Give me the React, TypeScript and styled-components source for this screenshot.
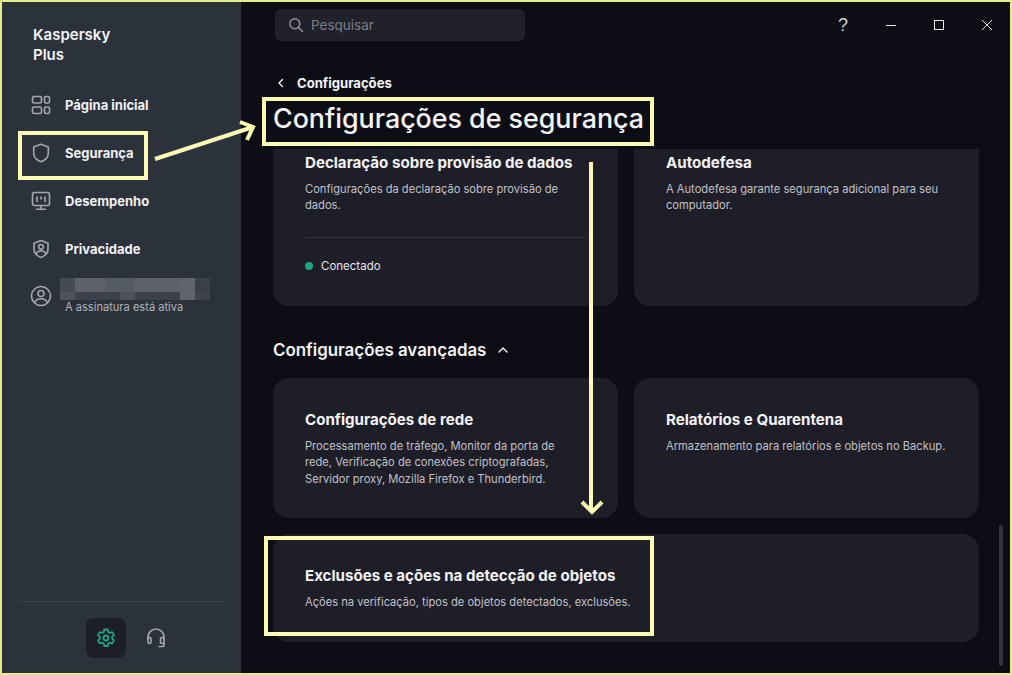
import React from "react";
import styled, { createGlobalStyle } from "styled-components";

const Global = createGlobalStyle`
  html, body { margin: 0; padding: 0; background: #0d0e15; }
  * { box-sizing: border-box; }
`;

const Frame = styled.div`
  position: relative;
  width: 1012px;
  height: 675px;
  overflow: hidden;
  display: flex;
  border: 2px solid #e4ec8c;
  background: #0d0e15;
  font-family: Inter, "Liberation Sans", sans-serif;
  color: #f4f4f6;
`;

const Sidebar = styled.aside`
  width: 239px;
  flex: none;
  display: flex;
  flex-direction: column;
  background: #2b323c;
  padding: 23px 15px 15px 16px;
`;

const Brand = styled.div`
  font-size: 15px;
  line-height: 20px;
  font-weight: 600;
  padding-left: 15px;
  color: #f2f3f5;
  margin-bottom: 16px;
`;

const Nav = styled.nav`
  display: flex;
  flex-direction: column;
`;

const NavRow = styled.div`
  display: flex;
  align-items: center;
  height: 48px;
  gap: 14px;
  padding-left: 13px;
  font-size: 13px;
  font-weight: 700;
  color: #f0f1f3;
  svg { flex: none; color: #a3a8af; }
`;

const AccountRow = styled.div`
  display: flex;
  align-items: flex-start;
  gap: 13px;
  padding-left: 12px;
  margin-top: 5px;
  svg { flex: none; color: #a3a8af; margin-top: 7px; }
`;

const AccountText = styled.div`
  display: flex;
  flex-direction: column;
  margin-left: -5px;
`;

const Mosaic = styled.div`
  display: grid;
  grid-template-columns: repeat(10, 15px);
  grid-template-rows: 14px 8px;
  width: 150px;
`;

const Tile = styled.div<{ $c: string }>`
  background: ${(p) => p.$c};
`;

const AccountNote = styled.div`
  font-size: 11.1px;
  line-height: 14px;
  color: #b1b5bb;
  padding-left: 5px;
`;

const SideFooter = styled.div`
  margin-top: auto;
  margin-left: 1px;
  border-top: 1px solid #3b424c;
  padding: 16px 0 0 67px;
  display: flex;
  gap: 10px;
`;

const FooterButton = styled.div<{ $active?: boolean }>`
  width: 40px;
  height: 40px;
  border-radius: 8px;
  display: flex;
  align-items: center;
  justify-content: center;
  background: ${(p) => (p.$active ? "#1e1e29" : "transparent")};
  color: ${(p) => (p.$active ? "#1fa584" : "#a3a8af")};
`;

const Main = styled.main`
  flex: 1;
  min-width: 0;
  display: flex;
  flex-direction: column;
  position: relative;
`;

const TopBar = styled.header`
  height: 46px;
  flex: none;
  display: flex;
  align-items: flex-start;
  justify-content: space-between;
  padding: 7px 0 0 34px;
`;

const Search = styled.div`
  width: 250px;
  height: 32px;
  border-radius: 6px;
  background: #20212a;
  display: flex;
  align-items: center;
  gap: 7px;
  padding-left: 13px;
  font-size: 13.5px;
  color: #7d7f88;
  svg { color: #90939a; }
`;

const WindowControls = styled.div`
  display: flex;
  height: 32px;
  align-items: center;
  margin-right: -1px;
`;

const WinButton = styled.div`
  width: 48px;
  height: 32px;
  display: flex;
  align-items: center;
  justify-content: center;
  color: #e9e9ea;
`;

const Help = styled.span`
  font-family: "Liberation Sans", sans-serif;
  font-size: 18px;
  font-weight: 400;
  color: #cfd0d2;
`;

const Crumb = styled.div`
  display: flex;
  align-items: center;
  height: 22px;
  margin-top: 24px;
  padding-left: 34px;
  gap: 10px;
  font-size: 13.1px;
  font-weight: 700;
  color: #f4f4f6;
  flex: none;
`;

const Title = styled.h1`
  margin: 0;
  flex: none;
  height: 55px;
  line-height: 48px;
  padding-left: 32px;
  font-size: 26.8px;
  font-weight: 500;
  color: #f6f6f8;
`;

const Scroller = styled.div`
  flex: 1;
  min-height: 0;
  overflow: hidden;
  padding: 0 31px 0 32px;
  display: flex;
  flex-direction: column;
`;

const CardGrid = styled.div`
  display: grid;
  grid-template-columns: 345px 345px;
  gap: 16px;
`;

const Card = styled.section<{ $h: number; $clipped?: boolean; $wide?: boolean }>`
  height: ${(p) => p.$h}px;
  background: #1e1e29;
  border-radius: ${(p) => (p.$clipped ? "0 0 16px 16px" : "16px")};
  padding: ${(p) => (p.$clipped ? "5px" : "33px")} 32px 0;
  display: flex;
  flex-direction: column;
  width: ${(p) => (p.$wide ? "706px" : "auto")};
`;

const CardTitle = styled.h3`
  margin: 0 0 9px;
  font-size: 15.1px;
  line-height: 18px;
  font-weight: 700;
  color: #f3f3f5;
`;

const CardText = styled.p`
  margin: 0;
  font-size: 11.15px;
  line-height: 16.4px;
  color: #c0c1c7;
`;

const Divider = styled.div`
  height: 1px;
  background: #33343e;
  margin-top: 23px;
`;

const Status = styled.div`
  display: flex;
  align-items: center;
  gap: 8px;
  margin-top: 21px;
  font-size: 11.5px;
  line-height: 14px;
  color: #e4e4e8;
`;

const Dot = styled.span`
  width: 8px;
  height: 8px;
  border-radius: 50%;
  background: #1fa584;
`;

const SectionHead = styled.h2`
  margin: 31px 0 15px;
  height: 26px;
  display: flex;
  align-items: center;
  gap: 11px;
  font-size: 16.9px;
  font-weight: 600;
  color: #f3f3f5;
`;

const WideSlot = styled.div`
  margin-top: 16px;
`;

const ScrollThumb = styled.div`
  position: absolute;
  right: 7px;
  top: 523px;
  width: 4px;
  height: 141px;
  border-radius: 2px;
  background: #33343e;
`;

const Callout = styled.div<{ $x: number; $y: number; $w: number; $h: number }>`
  position: absolute;
  left: ${(p) => p.$x}px;
  top: ${(p) => p.$y}px;
  width: ${(p) => p.$w}px;
  height: ${(p) => p.$h}px;
  border: 4px solid #fdfbb3;
  pointer-events: none;
`;

const Arrows = styled.svg`
  position: absolute;
  left: -2px;
  top: -2px;
  pointer-events: none;
`;

const sw = { fill: "none", stroke: "currentColor", strokeWidth: 1.6, strokeLinecap: "round" as const, strokeLinejoin: "round" as const };

const HomeIcon = () => (
  <svg width="20" height="20" viewBox="0 0 20 20" {...sw}>
    <rect x="1.500" y="1.500" width="9" height="6.500" rx="1.500" />
    <rect x="13.500" y="1.500" width="5" height="6.500" rx="1.500" />
    <rect x="1.500" y="12" width="9" height="6.500" rx="1.500" />
    <rect x="13.500" y="12" width="5" height="6.500" rx="1.500" />
  </svg>
);
const ShieldIcon = () => (
  <svg width="20" height="20" viewBox="0 0 20 20" {...sw}>
    <path d="M10 1.300 17.300 4.100V10c0 4.200-3.200 7.200-7.300 8.700C5.900 17.200 2.700 14.200 2.700 10V4.100Z" />
  </svg>
);
const MonitorIcon = () => (
  <svg width="20" height="20" viewBox="0 0 20 20" {...sw}>
    <rect x="1.500" y="1.500" width="17" height="13" rx="2" />
    <path d="M6 6v4.500M10 6v2M14 6v4.500M10 14.500V18M5.500 18.200h9" />
  </svg>
);
const PrivacyIcon = () => (
  <svg width="20" height="20" viewBox="0 0 20 20" {...sw}>
    <path d="M10 1.500 17 4.300V10c0 4.200-3 7-7 8.500C6 17 3 14.200 3 10V4.300Z" />
    <circle cx="10" cy="7.800" r="2.300" />
    <path d="M5.500 14.300c1-1.700 2.600-2.500 4.500-2.500s3.500.8 4.500 2.500" />
  </svg>
);
const UserIcon = () => (
  <svg width="22" height="22" viewBox="0 0 22 22" {...sw}>
    <circle cx="11" cy="11" r="9.500" />
    <circle cx="11" cy="8.500" r="3" />
    <path d="M4.800 17.500c1-2.500 3.300-3.700 6.200-3.700s5.200 1.200 6.200 3.700" />
  </svg>
);
const GearIcon = () => (
  <svg width="20" height="20" viewBox="0 0 20 20" {...sw} strokeWidth={1.8}>
    <path d="M8.300 1.500h3.400l.6 2.500 1.500.9 2.500-.7 1.700 2.900-1.900 1.800v1.700l1.900 1.800-1.700 2.900-2.500-.7-1.500.9-.6 2.500H8.300l-.6-2.500-1.500-.9-2.500.7-1.700-2.900 1.900-1.800V8.900L2 7.100l1.700-2.900 2.500.7 1.500-.9Z" />
    <circle cx="10" cy="10" r="2.500" />
  </svg>
);
const HeadsetIcon = () => (
  <svg width="20" height="20" viewBox="0 0 20 20" {...sw}>
    <path d="M2 11V9a8 8 0 0 1 16 0v2" />
    <rect x="2" y="9.500" width="3" height="6" rx="1.500" />
    <rect x="14.500" y="9.500" width="3.500" height="6" rx="1.700" />
    <path d="M18 15v2.500a1 1 0 0 1-1 1h-4" />
  </svg>
);
const SearchIcon = () => (
  <svg width="16" height="16" viewBox="0 0 16 16" fill="none" stroke="currentColor" strokeWidth="1.400" strokeLinecap="round">
    <circle cx="6.800" cy="6.800" r="5" />
    <path d="M10.500 10.500 14.500 14.500" />
  </svg>
);
const Chevron = ({ d }: { d: string }) => (
  <svg width="12" height="12" viewBox="0 0 12 12" fill="none" stroke="currentColor" strokeWidth="1.400" strokeLinecap="round" strokeLinejoin="round">
    <path d={d} />
  </svg>
);
const MinIcon = () => (
  <svg width="10" height="10" viewBox="0 0 10 10" stroke="currentColor" strokeWidth="1">
    <path d="M0 5.500h10" />
  </svg>
);
const MaxIcon = () => (
  <svg width="10" height="10" viewBox="0 0 10 10" fill="none" stroke="currentColor" strokeWidth="1">
    <rect x=".5" y=".5" width="9" height="9" />
  </svg>
);
const CloseIcon = () => (
  <svg width="10" height="10" viewBox="0 0 10 10" stroke="currentColor" strokeWidth="1">
    <path d="M0 0 10 10M10 0 0 10" />
  </svg>
);

const mosaic = [
  "#454b55", "#5d626c", "#5d626c", "#565c66", "#565c66", "#5d626c", "#5d626c", "#5d626c", "#5f646e", "#3a404a",
  "#4d525c", "#3c424c", "#3c424c", "#3c424c", "#4d525c", "#3c424c", "#3c424c", "#3c424c", "#5f646e", "#3f454f",
];

const navItems = [
  { label: "Página inicial", icon: <HomeIcon /> },
  { label: "Segurança", icon: <ShieldIcon /> },
  { label: "Desempenho", icon: <MonitorIcon /> },
  { label: "Privacidade", icon: <PrivacyIcon /> },
];

export default function App() {
  return (
    <>
      <Global />
      <Frame>
        <Sidebar>
          <Brand>
            Kaspersky
            <br />
            Plus
          </Brand>
          <Nav>
            {navItems.map((n) => (
              <NavRow key={n.label}>
                {n.icon}
                {n.label}
              </NavRow>
            ))}
          </Nav>
          <AccountRow>
            <UserIcon />
            <AccountText>
              <Mosaic>
                {mosaic.map((c, i) => (
                  <Tile key={i} $c={c} />
                ))}
              </Mosaic>
              <AccountNote>A assinatura está ativa</AccountNote>
            </AccountText>
          </AccountRow>
          <SideFooter>
            <FooterButton $active>
              <GearIcon />
            </FooterButton>
            <FooterButton>
              <HeadsetIcon />
            </FooterButton>
          </SideFooter>
        </Sidebar>
        <Main>
          <TopBar>
            <Search>
              <SearchIcon />
              Pesquisar
            </Search>
            <WindowControls>
              <WinButton>
                <Help>?</Help>
              </WinButton>
              <WinButton>
                <MinIcon />
              </WinButton>
              <WinButton>
                <MaxIcon />
              </WinButton>
              <WinButton>
                <CloseIcon />
              </WinButton>
            </WindowControls>
          </TopBar>
          <Crumb>
            <Chevron d="M7.500 2.500 4 6l3.500 3.500" />
            Configurações
          </Crumb>
          <Title>Configurações de segurança</Title>
          <Scroller>
            <CardGrid>
              <Card $h={157} $clipped>
                <CardTitle>Declaração sobre provisão de dados</CardTitle>
                <CardText>Configurações da declaração sobre provisão de dados.</CardText>
                <Divider />
                <Status>
                  <Dot />
                  Conectado
                </Status>
              </Card>
              <Card $h={157} $clipped>
                <CardTitle>Autodefesa</CardTitle>
                <CardText>
                  A Autodefesa garante segurança adicional para seu
                  <br />
                  computador.
                </CardText>
              </Card>
            </CardGrid>
            <SectionHead>
              Configurações avançadas
              <Chevron d="M2 8 6 4l4 4" />
            </SectionHead>
            <CardGrid>
              <Card $h={140}>
                <CardTitle>Configurações de rede</CardTitle>
                <CardText>
                  Processamento de tráfego, Monitor da porta de
                  <br />
                  rede, Verificação de conexões criptografadas,
                  <br />
                  Servidor proxy, Mozilla Firefox e Thunderbird.
                </CardText>
              </Card>
              <Card $h={140}>
                <CardTitle>Relatórios e Quarentena</CardTitle>
                <CardText>Armazenamento para relatórios e objetos no Backup.</CardText>
              </Card>
            </CardGrid>
            <WideSlot>
              <Card $h={108} $wide>
                <CardTitle>Exclusões e ações na detecção de objetos</CardTitle>
                <CardText>Ações na verificação, tipos de objetos detectados, exclusões.</CardText>
              </Card>
            </WideSlot>
          </Scroller>
          <ScrollThumb />
        </Main>
        <Callout $x={16} $y={129} $w={130} $h={49} />
        <Callout $x={260} $y={95} $w={392} $h={49} />
        <Callout $x={262} $y={534} $w={390} $h={100} />
        <Arrows width="1012" height="675" viewBox="0 0 1012 675" fill="none" stroke="#fdfbb3" strokeWidth="4">
          <path d="M155 159 253 127" />
          <path d="M240 122 253 127 247 140" strokeLinejoin="miter" />
          <path d="M591 162V511" />
          <path d="M582 502 592 512 602 502" strokeLinejoin="miter" />
        </Arrows>
      </Frame>
    </>
  );
}
